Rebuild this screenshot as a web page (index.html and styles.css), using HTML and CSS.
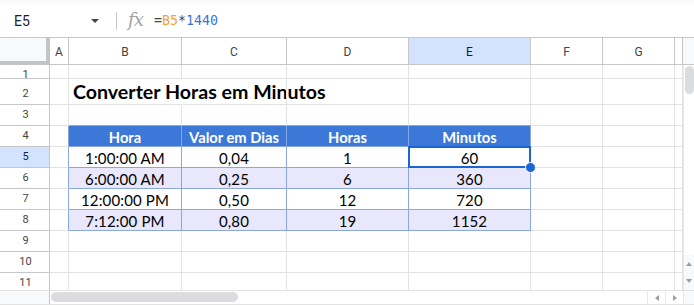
FILE: index.html
```html
<!DOCTYPE html>
<html>
<head>
<meta charset="utf-8">
<link rel="stylesheet" href="styles.css">
</head>
<body>
<div class="app">
  <div class="topband"></div>
  <div class="formula">
    <div class="namebox">E5</div>
    <div class="caret"></div>
    <div class="sep"></div>
    <div class="fx">fx</div>
    <div class="ftext"><span class="op">=</span><span class="ref">B5</span><span class="op">*</span><span class="num">1440</span></div>
  </div>
  <div class="main">
    <div class="viewport">
      <div class="grid">
        <!-- column header row -->
        <div class="corner"></div>
        <div class="ch">A</div>
        <div class="ch">B</div>
        <div class="ch">C</div>
        <div class="ch">D</div>
        <div class="ch sel">E</div>
        <div class="ch">F</div>
        <div class="ch">G</div>
        <div class="ch"></div>

        <!-- row 1 -->
        <div class="rh r1">1</div>
        <div class="c"></div><div class="c"></div><div class="c"></div><div class="c"></div><div class="c"></div><div class="c"></div><div class="c"></div><div class="c"></div>

        <!-- row 2 -->
        <div class="rh">2</div>
        <div class="c"></div>
        <div class="c title"><span>Converter Horas em Minutos</span></div>
        <div class="c"></div><div class="c"></div><div class="c"></div><div class="c"></div><div class="c"></div><div class="c"></div>

        <!-- row 3 -->
        <div class="rh">3</div>
        <div class="c"></div>
        <div class="c tb"></div><div class="c tb"></div><div class="c tb"></div><div class="c tb"></div>
        <div class="c"></div><div class="c"></div><div class="c"></div>

        <!-- row 4 -->
        <div class="rh">4</div>
        <div class="c tl"></div>
        <div class="c th">Hora</div>
        <div class="c th">Valor em Dias</div>
        <div class="c th">Horas</div>
        <div class="c th">Minutos</div>
        <div class="c"></div><div class="c"></div><div class="c"></div>

        <!-- row 5 -->
        <div class="rh sel">5</div>
        <div class="c tl"></div>
        <div class="c td">1:00:00 AM</div>
        <div class="c td">0,04</div>
        <div class="c td">1</div>
        <div class="c td active">60<span class="selbox"></span><span class="handle"></span></div>
        <div class="c"></div><div class="c"></div><div class="c"></div>

        <!-- row 6 -->
        <div class="rh">6</div>
        <div class="c tl"></div>
        <div class="c td alt">6:00:00 AM</div>
        <div class="c td alt">0,25</div>
        <div class="c td alt">6</div>
        <div class="c td alt">360</div>
        <div class="c"></div><div class="c"></div><div class="c"></div>

        <!-- row 7 -->
        <div class="rh">7</div>
        <div class="c tl"></div>
        <div class="c td">12:00:00 PM</div>
        <div class="c td">0,50</div>
        <div class="c td">12</div>
        <div class="c td">720</div>
        <div class="c"></div><div class="c"></div><div class="c"></div>

        <!-- row 8 -->
        <div class="rh">8</div>
        <div class="c tl"></div>
        <div class="c td alt">7:12:00 PM</div>
        <div class="c td alt">0,80</div>
        <div class="c td alt">19</div>
        <div class="c td alt">1152</div>
        <div class="c"></div><div class="c"></div><div class="c"></div>

        <!-- row 9 -->
        <div class="rh">9</div>
        <div class="c"></div><div class="c"></div><div class="c"></div><div class="c"></div><div class="c"></div><div class="c"></div><div class="c"></div><div class="c"></div>

        <!-- row 10 -->
        <div class="rh">10</div>
        <div class="c"></div><div class="c"></div><div class="c"></div><div class="c"></div><div class="c"></div><div class="c"></div><div class="c"></div><div class="c"></div>

        <!-- row 11 -->
        <div class="rh">11</div>
        <div class="c"></div><div class="c"></div><div class="c"></div><div class="c"></div><div class="c"></div><div class="c"></div><div class="c"></div><div class="c"></div>
      </div>
    </div>
    <div class="vscroll">
      <div class="vs-head"></div>
      <div class="vs-track"><div class="vs-thumb"></div></div>
      <div class="vs-arrows">
        <div class="arr up"></div>
        <div class="arr down"></div>
      </div>
    </div>
  </div>
  <div class="hscroll">
    <div class="hs-left"></div>
    <div class="hs-track"><div class="hs-thumb"></div></div>
    <div class="hs-btn"><span class="arr left"></span></div>
    <div class="hs-btn"><span class="arr right"></span></div>
    <div class="hs-corner"></div>
  </div>
</div>
</body>
</html>
```

FILE: styles.css
```css
* { box-sizing: border-box; }
html, body { margin: 0; padding: 0; background: #fff; }
body { width: 694px; height: 305px; overflow: hidden; font-family: "Liberation Sans", Arial, sans-serif; }

.app { width: 694px; height: 305px; display: flex; flex-direction: column; }

.topband { height: 4px; background: #f9fafb; flex: none; }

.formula {
  height: 34px; flex: none; display: flex; align-items: center;
  border-bottom: 1px solid #c7c7c7; background: #fff;
}
.namebox { width: 88px; padding-left: 14px; font-family: Roboto, "Liberation Sans", sans-serif; font-size: 14px; color: #1f1f1f; }
.caret {
  width: 0; height: 0; margin-left: 3px;
  border-left: 4px solid transparent; border-right: 4px solid transparent;
  border-top: 4px solid #444;
}
.sep { width: 1px; height: 18px; background: #c7c7c7; margin-left: 17px; }
.fx {
  margin-left: 11px; width: 23px;
  font-family: "DejaVu Serif", "Liberation Serif", serif; font-style: italic; font-size: 18px;
  color: #a3a3a3; letter-spacing: -1px; line-height: 1; padding-bottom: 2px;
}
.ftext { margin-left: 3px; font-family: "DejaVu Sans Mono", "Liberation Mono", monospace; font-size: 13.3px; color: #444; }
.ftext .ref { color: #f7a13b; }
.ftext .num { color: #3b76d6; }

.main { display: flex; height: 252px; flex: none; }
.viewport { width: 683px; height: 252px; overflow: hidden; flex: none; }

.grid {
  display: grid;
  grid-template-columns: 50px 19px 113px 105px 122px 122px 72px 72px 8px;
  grid-template-rows: 27px 14px 26px 21px 21px 21px 21px 21px 21px 21px 21px 21px;
}

.grid > div { border-right: 1px solid #e2e2e2; border-bottom: 1px solid #e2e2e2; overflow: hidden; }

.corner {
  background: #f8f9fa;
  border-right: 4px solid #c4c4c4 !important;
  border-bottom: 4px solid #c4c4c4 !important;
}
.grid > .ch {
  border-right-color: #c7c7c7; border-bottom-color: #c7c7c7;
  display: flex; align-items: center; justify-content: center;
  font-family: Roboto, "Liberation Sans", sans-serif; font-size: 12px; color: #444;
  padding-top: 1px;
}
.grid > .ch.sel { background: #d3e3fd; color: #0b1f4d; }
.grid > .rh {
  border-right-color: #c7c7c7; border-bottom-color: #c7c7c7;
  display: flex; align-items: flex-end; justify-content: center;
  font-family: Roboto, "Liberation Sans", sans-serif; font-size: 11px; color: #444;
  line-height: 21px; padding-left: 2px;
}
.grid > .rh.r1 { align-items: flex-start; line-height: 19px; }
.grid > .rh.sel { background: #d3e3fd; color: #0b1f4d; }

.c { position: relative; }

.grid > .c.title {
  overflow: visible;
  display: flex; align-items: flex-end; padding-left: 4px; padding-bottom: 1px;
  font-family: Lato, "Open Sans", sans-serif; font-weight: 700; font-size: 19.6px; color: #000;
  white-space: nowrap; border-right-color: transparent;
}

.grid > .tb { border-bottom-color: #8aa8de; }
.grid > .tl { border-right-color: #8aa8de; }

.grid > .th {
  background: #3c78d8; color: #fff; border-right-color: #87a6df; border-bottom-color: #87a6df;
  display: flex; align-items: flex-end; justify-content: center;
  font-family: Lato, "Open Sans", sans-serif; font-weight: 700; font-size: 14.7px; padding-bottom: 0;
}
.grid > .td {
  border-right-color: #8aa8de; border-bottom-color: #8aa8de;
  display: flex; align-items: flex-end; justify-content: center;
  font-family: Lato, "Open Sans", sans-serif; font-size: 15px; color: #000; padding-bottom: 0;
  letter-spacing: 0.15px;
}
.grid > .td.alt { background: #e8e7fc; }
.grid > .active { overflow: visible; }

.selbox {
  position: absolute; left: -1px; top: -1px; right: -1px; bottom: -1px;
  border: 2px solid #1a66d8; pointer-events: none;
}
.handle {
  position: absolute; right: -6px; bottom: -6px; width: 11px; height: 11px;
  border-radius: 50%; background: #1a66d8; border: 1px solid #fff; z-index: 2;
}

.vscroll { width: 11px; flex: none; display: flex; flex-direction: column; background: #fff; }
.vs-head { height: 27px; background: #f8f9fa; border-bottom: 1px solid #c7c7c7; flex: none; }
.vs-track { flex: 1; position: relative; border-left: 1px solid #e8e8e8; }
.vs-thumb { position: absolute; left: 1px; right: 0; top: 1px; height: 28px; background: #dadce0; border-radius: 5px; }
.vs-arrows { height: 35px; flex: none; display: flex; flex-direction: column; justify-content: space-around; align-items: center; background: #f8f9fa; border-left: 1px solid #e8e8e8; }

.arr { width: 0; height: 0; display: block; }
.arr.up { border-left: 3.5px solid transparent; border-right: 3.5px solid transparent; border-bottom: 4px solid #9e9e9e; }
.arr.down { border-left: 3.5px solid transparent; border-right: 3.5px solid transparent; border-top: 4px solid #9e9e9e; }
.arr.left { border-top: 3.5px solid transparent; border-bottom: 3.5px solid transparent; border-right: 4px solid #9e9e9e; }
.arr.right { border-top: 3.5px solid transparent; border-bottom: 3.5px solid transparent; border-left: 4px solid #9e9e9e; }

.hscroll { height: 15px; flex: none; display: flex; border-top: 1px solid #e2e2e2; border-bottom: 1px solid #e2e2e2; background: #fff; }
.hs-left { width: 50px; background: #f8f9fa; border-right: 1px solid #c7c7c7; flex: none; }
.hs-track { flex: 1; position: relative; }
.hs-thumb { position: absolute; left: 1px; top: 1px; width: 187px; height: 10px; background: #dadce0; border-radius: 5px; }
.hs-btn { width: 18px; flex: none; display: flex; align-items: center; justify-content: center; border-left: 1px solid #e8e8e8; }
.hs-corner { width: 11px; flex: none; background: #f8f9fa; border-left: 1px solid #e8e8e8; }
```
